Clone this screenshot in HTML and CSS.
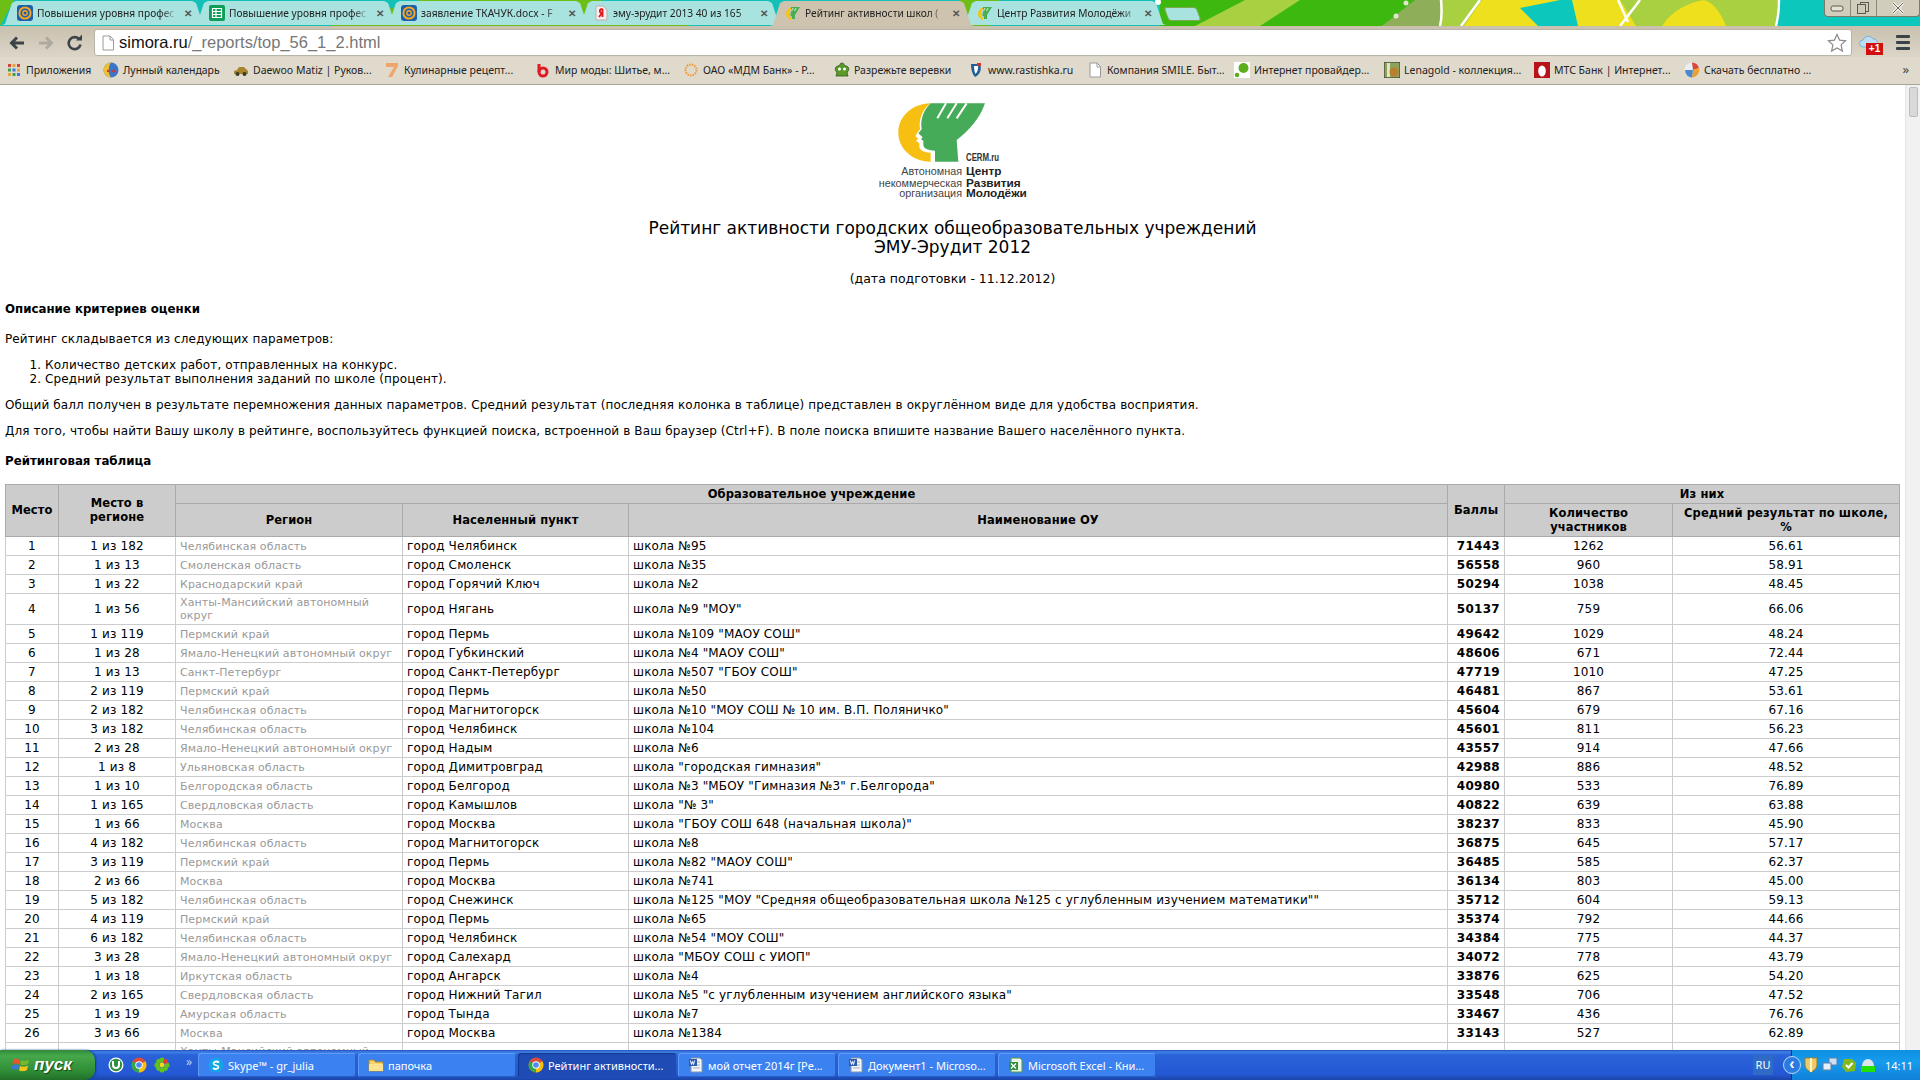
FILE: index.html
```html
<!DOCTYPE html>
<html lang="ru">
<head>
<meta charset="utf-8">
<title>Рейтинг активности школ</title>
<link rel="stylesheet" href="styles.css">
</head>
<body>
<svg class="defs" width="0" height="0" aria-hidden="true">
  <symbol id="i-mail" viewBox="0 0 16 16"><rect x="0" y="0" width="16" height="16" rx="3" fill="#1d5fa8"/><circle cx="8" cy="8" r="5.6" fill="none" stroke="#f6a623" stroke-width="2"/><circle cx="8" cy="8" r="2.2" fill="none" stroke="#f6a623" stroke-width="1.4"/></symbol>
  <symbol id="i-sheet" viewBox="0 0 16 16"><rect width="16" height="16" rx="2" fill="#0f9d58"/><path d="M3.5 3.5h9v9h-9zM3.5 6.5h9M3.5 9.5h9M7 3.5v9" fill="none" stroke="#fff" stroke-width="1.2"/></symbol>
  <symbol id="i-ya" viewBox="0 0 16 16"><path d="M3 1h7l4 4v10H3z" fill="#f4eeee" stroke="#b9b0b0"/><path d="M9.5 4v8M9.5 4C6 4 6 8 9 8L6 12" fill="none" stroke="#e01818" stroke-width="1.8"/></symbol>
  <symbol id="i-cerm" viewBox="0 0 16 16"><path d="M7 2C3 3 1 6 1 9s2 5 5 6l0-2C4 12 4 7 7 2z" fill="#f6c315"/><path d="M6 2h9L10 10v4H7v-2L5 10l1-2z" fill="#4cae54"/><path d="M8 3L6.5 6M11 3L9.5 6" stroke="#fff" stroke-width=".8"/></symbol>
  <symbol id="i-page" viewBox="0 0 16 16"><path d="M3 1h7l3.500 3.500V15H3z" fill="#fff" stroke="#9a9a9a"/><path d="M10 1v4h3.500" fill="none" stroke="#9a9a9a"/></symbol>
  <symbol id="i-word" viewBox="0 0 16 16"><path d="M3 1h9l2 2v12H3z" fill="#f3f6fb" stroke="#8a93a8"/><path d="M5 5h7M5 8h7M5 11h7" stroke="#9fb0cc"/><rect x="1" y="2" width="8" height="7" fill="#2f5cb0"/><path d="M2.500 3.500l1 4 1-3 1 3 1-4" fill="none" stroke="#fff"/></symbol>
  <symbol id="i-chrome" viewBox="0 0 16 16"><circle cx="8" cy="8" r="7.500" fill="#dd4b39"/><path d="M8 8L1.500 4.300A7.500 7.500 0 0 0 8 15.500z" fill="#2fa84f"/><path d="M8 8v7.500A7.500 7.500 0 0 0 14.500 4.300z" fill="#f4c20d"/><circle cx="8" cy="8" r="3.700" fill="#fff"/><circle cx="8" cy="8" r="2.800" fill="#4a8af4"/></symbol>
</svg>

<div class="window">
  <header class="browser">
    <div class="tabstrip">
      <svg class="theme" viewBox="0 0 1920 26" preserveAspectRatio="none" aria-hidden="true">
        <rect width="1920" height="26" fill="#3cb80f"/>
        <path d="M0 0H1160V26H0z" fill="#13c1b8"/>
        <path d="M0 26V0H14L0 26zM330 26L420 0H600L690 26zM960 0H1000L990 26H950z" fill="#6dbf16"/>
        <path d="M1195 26L1245 0H1300L1260 26z" fill="#a8d040"/>
        <path d="M1382 26L1420 0H1920V26z" fill="#a8d040"/>
        <path d="M1382 26L1415 0H1440L1440 26z" fill="#8fae5a"/>
        <path d="M1464 26L1482 0H1620L1636 26z" fill="#eee01c"/>
        <path d="M1520 8L1560 0H1572L1578 26L1538 26z" fill="#0cc8bc"/>
        <path d="M1662 26C1672 10 1690 2 1704 0C1716 4 1722 16 1726 26z" fill="#eee01c"/>
        <path d="M1778 0H1920V26H1776z" fill="#0cc8bc"/>
        <path d="M1441 0C1442 10 1442 18 1440 26M1480 0L1461 26M1640 0L1620 26M1618 0L1628 22M1779 0C1779 10 1778 18 1776 26" fill="none" stroke="#fff" stroke-width="2.500"/>
        <circle cx="1158" cy="2" r="3" fill="#fff"/><circle cx="1396" cy="16" r="2.500" fill="#dfe7cf"/><circle cx="1406" cy="3" r="2.500" fill="#dfe7cf"/>
      </svg>
      <div class="tabs">
        <div class="tab"><svg class="fav"><use href="#i-mail"/></svg><span class="tab-title">Повышения уровня профес</span><span class="tab-x">✕</span></div>
        <div class="tab"><svg class="fav"><use href="#i-sheet"/></svg><span class="tab-title">Повышение уровня профес</span><span class="tab-x">✕</span></div>
        <div class="tab"><svg class="fav"><use href="#i-mail"/></svg><span class="tab-title">заявление ТКАЧУК.docx - F</span><span class="tab-x">✕</span></div>
        <div class="tab"><svg class="fav"><use href="#i-ya"/></svg><span class="tab-title">эму-эрудит 2013 40 из 165</span><span class="tab-x">✕</span></div>
        <div class="tab tab-active"><svg class="fav"><use href="#i-cerm"/></svg><span class="tab-title">Рейтинг активности школ (</span><span class="tab-x">✕</span></div>
        <div class="tab"><svg class="fav"><use href="#i-cerm"/></svg><span class="tab-title">Центр Развития Молодёжи</span><span class="tab-x">✕</span></div>
        <div class="tab-new"></div>
      </div>
      <div class="winbtns">
        <span class="winbtn"><svg width="14" height="8" viewBox="0 0 14 8"><rect x="1" y="2" width="12" height="5" rx="2" fill="#e7e2d6" stroke="#5d5a50"/></svg></span>
        <span class="winbtn"><svg width="14" height="14" viewBox="0 0 14 14"><rect x="4.500" y="1.500" width="8" height="9" fill="none" stroke="#5d5a50"/><rect x="1.500" y="3.500" width="8" height="9" fill="#cfc9ba" stroke="#5d5a50"/></svg></span>
        <span class="winbtn winbtn-close"><svg width="14" height="12" viewBox="0 0 14 12"><path d="M2 1l10 10M12 1L2 11" stroke="#f2efe7" stroke-width="3"/><path d="M2 1l10 10M12 1L2 11" stroke="#6b675c" stroke-width="1"/></svg></span>
      </div>
    </div>

    <div class="toolbar">
      <svg class="tool-ico" viewBox="0 0 18 18"><path d="M16 9H4M9 3.500L3.500 9 9 14.500" fill="none" stroke="#3d4448" stroke-width="3"/></svg>
      <svg class="tool-ico" viewBox="0 0 18 18"><path d="M2 9h12M9 3.500L14.500 9 9 14.500" fill="none" stroke="#aeaaa0" stroke-width="3"/></svg>
      <svg class="tool-ico" viewBox="0 0 18 18"><path d="M14.500 10.500A6 6 0 1 1 13 5" fill="none" stroke="#3d4448" stroke-width="2.600"/><path d="M10 6.500h6v-6z" fill="#3d4448"/></svg>
      <div class="omnibox">
        <svg class="fav"><use href="#i-page"/></svg>
        <span class="url"><span class="url-host">simora.ru</span>/_reports/top_56_1_2.html</span>
        <svg class="star" viewBox="0 0 20 20"><path d="M10 1.500l2.600 5.600 6 .7-4.500 4.100 1.300 6.100-5.400-3.100-5.400 3.100 1.300-6.100L1.400 7.800l6-.7z" fill="#fff" stroke="#8b8b8b" stroke-width="1.200"/></svg>
      </div>
      <div class="ext">
        <svg class="ext-cloud" viewBox="0 0 20 14"><path d="M4 13a3.500 3.500 0 0 1 0-7 5.500 5.500 0 0 1 10-1 4 4 0 0 1 1 8z" fill="#bcdcf2" stroke="#7fb2d8"/></svg>
        <span class="ext-badge">+1</span>
      </div>
      <div class="hamburger"><i></i><i></i><i></i></div>
    </div>

    <nav class="bookmarks">
      <a class="bm bm-1"><svg class="fav" viewBox="0 0 16 16"><g><rect x="2" y="2" width="3" height="3" fill="#d9423a"/><rect x="6.500" y="2" width="3" height="3" fill="#e8a33a"/><rect x="11" y="2" width="3" height="3" fill="#d9423a"/><rect x="2" y="6.500" width="3" height="3" fill="#3f9e4d"/><rect x="6.500" y="6.500" width="3" height="3" fill="#3b78e7"/><rect x="11" y="6.500" width="3" height="3" fill="#e8a33a"/><rect x="2" y="11" width="3" height="3" fill="#e8a33a"/><rect x="6.500" y="11" width="3" height="3" fill="#3f9e4d"/><rect x="11" y="11" width="3" height="3" fill="#3b78e7"/></g></svg>Приложения</a>
      <a class="bm bm-2"><svg class="fav" viewBox="0 0 16 16"><circle cx="8" cy="8" r="7.500" fill="#3a76c8"/><path d="M8 .5A7.500 7.500 0 0 0 8 15.500C5 12 5 4 8 .5z" fill="#f0c030"/><circle cx="10.500" cy="9" r="1.500" fill="#d8352a"/><circle cx="5" cy="9" r="1.200" fill="#d8352a"/></svg>Лунный календарь</a>
      <a class="bm bm-3"><svg class="fav" viewBox="0 0 16 16"><path d="M1 12V9l3-1 2-3h5l3 3 1 1v3z" fill="#a8872c"/><circle cx="4.500" cy="12" r="2" fill="#3a3a28"/><circle cx="11.500" cy="12" r="2" fill="#3a3a28"/></svg>Daewoo Matiz | Руков...</a>
      <a class="bm bm-4"><svg class="fav" viewBox="0 0 16 16"><path d="M2 1h12v3L8 15H4l6-10H2z" fill="#f0a56c"/></svg>Кулинарные рецепт...</a>
      <a class="bm bm-5"><svg class="fav" viewBox="0 0 16 16"><path d="M4 2v8" stroke="#e01b24" stroke-width="3"/><circle cx="8" cy="10" r="4" fill="none" stroke="#e01b24" stroke-width="3"/></svg>Мир моды: Шитье, м...</a>
      <a class="bm bm-6"><svg class="fav" viewBox="0 0 16 16"><circle cx="8" cy="8" r="5.500" fill="none" stroke="#ef9a3c" stroke-width="2" stroke-dasharray="1.600 1"/></svg>ОАО «МДМ Банк» - Р...</a>
      <a class="bm bm-7"><svg class="fav" viewBox="0 0 16 16"><path d="M8 1a2 2 0 0 1 2 2l2 1a3 3 0 0 1 2 5l-1 2 1 3H2l1-3-1-2a3 3 0 0 1 2-5l2-1a2 2 0 0 1 2-2z" fill="#5a9a2a" stroke="#2f5a18" stroke-width=".8"/><circle cx="5.500" cy="7" r="1.500" fill="#fff"/><circle cx="10.500" cy="7" r="1.500" fill="#fff"/></svg>Разрежьте веревки</a>
      <a class="bm bm-8"><svg class="fav" viewBox="0 0 16 16"><path d="M3 2h9C14 7 12 13 7 15 4 12 3 7 3 2z" fill="#1d5f96"/><path d="M6 4h4C10.500 7 9.500 10 7.500 12 6.500 10 6 7 6 4z" fill="#fff"/><path d="M9 1h4v3H9z" fill="#d8352a"/></svg>www.rastishka.ru</a>
      <a class="bm bm-9"><svg class="fav"><use href="#i-page"/></svg>Компания SMILE. Быт...</a>
      <a class="bm bm-10"><svg class="fav" viewBox="0 0 16 16"><rect width="16" height="16" fill="#fff"/><circle cx="9.500" cy="6" r="5" fill="#5cae1a"/><circle cx="3" cy="13" r="2.300" fill="#5cae1a"/></svg>Интернет провайдер...</a>
      <a class="bm bm-11"><svg class="fav" viewBox="0 0 16 16"><rect width="16" height="16" fill="#8fa15a" stroke="#333"/><rect x="3" y="1" width="3" height="14" fill="#dfe7c0"/><circle cx="10" cy="10" r="4.500" fill="#b8802c"/></svg>Lenagold - коллекция...</a>
      <a class="bm bm-12"><svg class="fav" viewBox="0 0 16 16"><rect width="16" height="16" fill="#b8121a"/><ellipse cx="8" cy="9" rx="3.800" ry="5.500" fill="#fff"/></svg>МТС Банк | Интернет...</a>
      <a class="bm bm-13"><svg class="fav" viewBox="0 0 16 16"><circle cx="8" cy="8" r="7.500" fill="#e8eef4"/><path d="M8 .5A7.500 7.500 0 0 1 15 6L9 8z" fill="#d8483a"/><path d="M15 6A7.500 7.500 0 0 1 8 15.500L9 8z" fill="#eea12e"/><path d="M8 15.500A7.500 7.500 0 0 1 1 8l8 0z" fill="#4a8ac8"/></svg>Скачать бесплатно ...</a>
      <span class="bm-more">»</span>
    </nav>
  </header>

  <div class="viewport">
    <main class="page">
      <svg class="logo" viewBox="878 100 150 100" role="img" aria-label="Центр Развития Молодёжи">
        <g transform="translate(840 90) scale(.33333)">
          <path d="M272 40C215 42 175 80 175 128C175 175 215 213 272 215V188C252 187 238 180 238 170V160L228 152L235 146L226 138L232 128L240 118C235 85 250 55 272 40Z" fill="#f6bf12"/>
          <path d="M272 40H435C420 85 385 125 350 150L355 215H285V182C268 182 250 176 250 165V152L243 148L248 142L235 130L245 118C240 88 252 58 272 40Z" fill="#46ab58"/>
          <path d="M318 40L292 85M350 40L322 85M380 40L350 85" stroke="#fff" stroke-width="6"/>
        </g>
        <text class="logo-brand" x="966" y="161" textLength="33" lengthAdjust="spacingAndGlyphs">CERM.ru</text>
        <g class="logo-light"><text x="962" y="175">Автономная</text><text x="962" y="187">некоммерческая</text><text x="962" y="197">организация</text></g>
        <g class="logo-bold"><text x="966" y="175">Центр</text><text x="966" y="187">Развития</text><text x="966" y="197">Молодёжи</text></g>
      </svg>
      <h1 class="title">Рейтинг активности городских общеобразовательных учреждений<br>ЭМУ-Эрудит 2012</h1>
      <p class="date">(дата подготовки - 11.12.2012)</p>
      <h2 class="subhead">Описание критериев оценки</h2>
      <p class="text">Рейтинг складывается из следующих параметров:</p>
      <ol class="criteria">
        <li>Количество детских работ, отправленных на конкурс.</li>
        <li>Средний результат выполнения заданий по школе (процент).</li>
      </ol>
      <p class="text text-a">Общий балл получен в результате перемножения данных параметров. Средний результат (последняя колонка в таблице) представлен в округлённом виде для удобства восприятия.</p>
      <p class="text text-b">Для того, чтобы найти Вашу школу в рейтинге, воспользуйтесь функцией поиска, встроенной в Ваш браузер (Ctrl+F). В поле поиска впишите название Вашего населённого пункта.</p>
      <h2 class="subhead subhead-table">Рейтинговая таблица</h2>

      <table class="rating">
        <colgroup><col class="c1"><col class="c2"><col class="c3"><col class="c4"><col class="c5"><col class="c6"><col class="c7"><col class="c8"></colgroup>
        <thead>
          <tr class="h1"><th rowspan="2" class="th-side">Место</th><th rowspan="2" class="th-side">Место в<br>регионе</th><th colspan="3">Образовательное учреждение</th><th rowspan="2" class="th-score">Баллы</th><th colspan="2">Из них</th></tr>
          <tr class="h2"><th class="th-low">Регион</th><th class="th-low">Населенный пункт</th><th class="th-low">Наименование ОУ</th><th>Количество<br>участников</th><th>Средний результат по школе,<br>%</th></tr>
        </thead>
        <tbody>
          <tr><td>1</td><td>1 из 182</td><td class="reg">Челябинская область</td><td class="left">город Челябинск</td><td class="left">школа №95</td><td class="sc">71443</td><td>1262</td><td>56.61</td></tr>
          <tr><td>2</td><td>1 из 13</td><td class="reg">Смоленская область</td><td class="left">город Смоленск</td><td class="left">школа №35</td><td class="sc">56558</td><td>960</td><td>58.91</td></tr>
          <tr><td>3</td><td>1 из 22</td><td class="reg">Краснодарский край</td><td class="left">город Горячий Ключ</td><td class="left">школа №2</td><td class="sc">50294</td><td>1038</td><td>48.45</td></tr>
          <tr class="tall"><td>4</td><td>1 из 56</td><td class="reg">Ханты-Мансийский автономный округ</td><td class="left">город Нягань</td><td class="left">школа №9 "МОУ"</td><td class="sc">50137</td><td>759</td><td>66.06</td></tr>
          <tr><td>5</td><td>1 из 119</td><td class="reg">Пермский край</td><td class="left">город Пермь</td><td class="left">школа №109 "МАОУ СОШ"</td><td class="sc">49642</td><td>1029</td><td>48.24</td></tr>
          <tr><td>6</td><td>1 из 28</td><td class="reg">Ямало-Ненецкий автономный округ</td><td class="left">город Губкинский</td><td class="left">школа №4 "МАОУ СОШ"</td><td class="sc">48606</td><td>671</td><td>72.44</td></tr>
          <tr><td>7</td><td>1 из 13</td><td class="reg">Санкт-Петербург</td><td class="left">город Санкт-Петербург</td><td class="left">школа №507 "ГБОУ СОШ"</td><td class="sc">47719</td><td>1010</td><td>47.25</td></tr>
          <tr><td>8</td><td>2 из 119</td><td class="reg">Пермский край</td><td class="left">город Пермь</td><td class="left">школа №50</td><td class="sc">46481</td><td>867</td><td>53.61</td></tr>
          <tr><td>9</td><td>2 из 182</td><td class="reg">Челябинская область</td><td class="left">город Магнитогорск</td><td class="left">школа №10 "МОУ СОШ № 10 им. В.П. Поляничко"</td><td class="sc">45604</td><td>679</td><td>67.16</td></tr>
          <tr><td>10</td><td>3 из 182</td><td class="reg">Челябинская область</td><td class="left">город Челябинск</td><td class="left">школа №104</td><td class="sc">45601</td><td>811</td><td>56.23</td></tr>
          <tr><td>11</td><td>2 из 28</td><td class="reg">Ямало-Ненецкий автономный округ</td><td class="left">город Надым</td><td class="left">школа №6</td><td class="sc">43557</td><td>914</td><td>47.66</td></tr>
          <tr><td>12</td><td>1 из 8</td><td class="reg">Ульяновская область</td><td class="left">город Димитровград</td><td class="left">школа "городская гимназия"</td><td class="sc">42988</td><td>886</td><td>48.52</td></tr>
          <tr><td>13</td><td>1 из 10</td><td class="reg">Белгородская область</td><td class="left">город Белгород</td><td class="left">школа №3 "МБОУ "Гимназия №3" г.Белгорода"</td><td class="sc">40980</td><td>533</td><td>76.89</td></tr>
          <tr><td>14</td><td>1 из 165</td><td class="reg">Свердловская область</td><td class="left">город Камышлов</td><td class="left">школа "№ 3"</td><td class="sc">40822</td><td>639</td><td>63.88</td></tr>
          <tr><td>15</td><td>1 из 66</td><td class="reg">Москва</td><td class="left">город Москва</td><td class="left">школа "ГБОУ СОШ 648 (начальная школа)"</td><td class="sc">38237</td><td>833</td><td>45.90</td></tr>
          <tr><td>16</td><td>4 из 182</td><td class="reg">Челябинская область</td><td class="left">город Магнитогорск</td><td class="left">школа №8</td><td class="sc">36875</td><td>645</td><td>57.17</td></tr>
          <tr><td>17</td><td>3 из 119</td><td class="reg">Пермский край</td><td class="left">город Пермь</td><td class="left">школа №82 "МАОУ СОШ"</td><td class="sc">36485</td><td>585</td><td>62.37</td></tr>
          <tr><td>18</td><td>2 из 66</td><td class="reg">Москва</td><td class="left">город Москва</td><td class="left">школа №741</td><td class="sc">36134</td><td>803</td><td>45.00</td></tr>
          <tr><td>19</td><td>5 из 182</td><td class="reg">Челябинская область</td><td class="left">город Снежинск</td><td class="left">школа №125 "МОУ "Средняя общеобразовательная школа №125 с углубленным изучением математики""</td><td class="sc">35712</td><td>604</td><td>59.13</td></tr>
          <tr><td>20</td><td>4 из 119</td><td class="reg">Пермский край</td><td class="left">город Пермь</td><td class="left">школа №65</td><td class="sc">35374</td><td>792</td><td>44.66</td></tr>
          <tr><td>21</td><td>6 из 182</td><td class="reg">Челябинская область</td><td class="left">город Челябинск</td><td class="left">школа №54 "МОУ СОШ"</td><td class="sc">34384</td><td>775</td><td>44.37</td></tr>
          <tr><td>22</td><td>3 из 28</td><td class="reg">Ямало-Ненецкий автономный округ</td><td class="left">город Салехард</td><td class="left">школа "МБОУ СОШ с УИОП"</td><td class="sc">34072</td><td>778</td><td>43.79</td></tr>
          <tr><td>23</td><td>1 из 18</td><td class="reg">Иркутская область</td><td class="left">город Ангарск</td><td class="left">школа №4</td><td class="sc">33876</td><td>625</td><td>54.20</td></tr>
          <tr><td>24</td><td>2 из 165</td><td class="reg">Свердловская область</td><td class="left">город Нижний Тагил</td><td class="left">школа №5 "с углубленным изучением английского языка"</td><td class="sc">33548</td><td>706</td><td>47.52</td></tr>
          <tr><td>25</td><td>1 из 19</td><td class="reg">Амурская область</td><td class="left">город Тында</td><td class="left">школа №7</td><td class="sc">33467</td><td>436</td><td>76.76</td></tr>
          <tr><td>26</td><td>3 из 66</td><td class="reg">Москва</td><td class="left">город Москва</td><td class="left">школа №1384</td><td class="sc">33143</td><td>527</td><td>62.89</td></tr>
          <tr class="tall"><td></td><td></td><td class="reg">Ханты-Мансийский автономный округ</td><td class="left"></td><td class="left"></td><td class="sc"></td><td></td><td></td></tr>
        </tbody>
      </table>
    </main>
    <div class="scrollbar"><div class="thumb"></div></div>
  </div>

  <footer class="taskbar">
    <div class="start"><svg class="flag" viewBox="0 0 18 18"><path d="M1 4c3-2 5-1 7 0L7 8.500C5 7.500 3 7 .5 8.500z" fill="#e8552a"/><path d="M9 4c2 1 5 1.500 8-.5L16 8c-3 1.500-5 1.500-8 .5z" fill="#77b82a"/><path d="M.5 9.500C3 8 5 8.500 7 9.500L6 14c-2-1-4-1.500-6.500 0z" fill="#3b78e0"/><path d="M8 10c2 1 5 1 8-.5L15 14c-3 1.500-5 1.500-8 .5z" fill="#f3c31c"/></svg><span>пуск</span></div>
    <div class="quick">
      <svg class="fav" viewBox="0 0 16 16"><circle cx="8" cy="8" r="7.500" fill="#fff"/><circle cx="8" cy="8" r="6.200" fill="#2f8f3e"/><path d="M5 4v4a3 3 0 0 0 6 0V4" fill="none" stroke="#fff" stroke-width="2"/></svg>
      <svg class="fav"><use href="#i-chrome"/></svg>
      <svg class="fav" viewBox="0 0 16 16"><g fill="#5fc21e"><circle cx="8" cy="3" r="2.600"/><circle cx="8" cy="13" r="2.600"/><circle cx="3" cy="8" r="2.600"/><circle cx="13" cy="8" r="2.600"/><circle cx="4.500" cy="4.500" r="2.400"/><circle cx="11.500" cy="11.500" r="2.400"/><circle cx="4.500" cy="11.500" r="2.400"/></g><circle cx="11.500" cy="4.500" r="2.400" fill="#e43d2e"/><circle cx="8" cy="8" r="2.400" fill="#f6d51c"/></svg>
      <span class="quick-more">»</span>
    </div>
    <div class="tasks">
      <div class="task"><svg class="fav" viewBox="0 0 16 16"><circle cx="8" cy="8" r="7.500" fill="#12a5e8"/><path d="M11 5.500C9 3.800 5.500 4.500 5.500 6.500s5 1.500 5 3.500-3.500 2.800-5.500 1" fill="none" stroke="#fff" stroke-width="1.800"/></svg><span class="task-t">Skype™ - gr_julia</span></div>
      <div class="task"><svg class="fav" viewBox="0 0 16 16"><path d="M1 3h5l1.500 2H15v9H1z" fill="#f5d26b" stroke="#a98a2a"/><path d="M1 7h14v7H1z" fill="#fbe391"/></svg><span class="task-t">папочка</span></div>
      <div class="task task-active"><svg class="fav"><use href="#i-chrome"/></svg><span class="task-t">Рейтинг активности...</span></div>
      <div class="task"><svg class="fav"><use href="#i-word"/></svg><span class="task-t">мой отчет 2014г [Ре...</span></div>
      <div class="task"><svg class="fav"><use href="#i-word"/></svg><span class="task-t">Документ1 - Microso...</span></div>
      <div class="task"><svg class="fav" viewBox="0 0 16 16"><path d="M3 1h9l2 2v12H3z" fill="#eaf5e6" stroke="#4f9a4a"/><rect x="1" y="5" width="9" height="8" fill="#2f8f3e"/><path d="M3 6.500l5 5M8 6.500l-5 5" stroke="#fff" stroke-width="1.300"/></svg><span class="task-t">Microsoft Excel - Кни...</span></div>
    </div>
    <div class="lang">RU</div>
    <div class="tray">
      <span class="tray-back">‹</span>
      <svg class="fav" viewBox="0 0 16 16"><path d="M2 1h12v7c0 3-3 6-6 7-3-1-6-4-6-7z" fill="#eecb6a" stroke="#9a7a22"/><path d="M8 1v14" stroke="#fff4c8" stroke-width="2"/></svg>
      <svg class="fav" viewBox="0 0 16 16"><rect x="7" y="1" width="8" height="7" fill="#cfe0f5" stroke="#5c7ea8"/><rect x="1" y="6" width="8" height="7" fill="#e6eef8" stroke="#5c7ea8"/></svg>
      <svg class="fav" viewBox="0 0 16 16"><path d="M3 2h8l4 4-1 8-9 1-4-5z" fill="#83b81f"/><path d="M5 8l2.500 2.500L11.500 6" fill="none" stroke="#fff" stroke-width="2"/></svg>
      <svg class="fav" viewBox="0 0 16 16"><path d="M2 9a6 7 0 0 1 12 0z" fill="#dce4ec"/><rect x="1" y="9" width="14" height="6" fill="#22e000"/></svg>
      <span class="clock">14:11</span>
    </div>
  </footer>
</div>
</body>
</html>
```

FILE: styles.css
```css
* { box-sizing: border-box; }
html, body { margin: 0; padding: 0; height: 100%; overflow: hidden; background: #fff; }
.defs { position: absolute; }
.window { width: 1920px; height: 1080px; display: flex; flex-direction: column; overflow: hidden; font-family: "DejaVu Sans", Verdana, sans-serif; }
.fav { width: 16px; height: 16px; flex: none; display: block; }

/* browser frame */
.browser { flex: none; font-family: "Noto Sans", "Liberation Sans", sans-serif; }
.tabstrip { position: relative; height: 26px; overflow: hidden; }
.theme { position: absolute; inset: 0; width: 100%; height: 100%; }
.tabs { position: relative; display: flex; height: 25px; padding-left: 2px; padding-top: 1px; }
.tab { flex: none; width: 204px; margin-right: -12px; height: 24px; display: flex; align-items: center; gap: 4px; padding: 0 12px 1px 15px; font-size: 10.200px; color: #222; background: #a8e3df; clip-path: polygon(0 100%, 3px 96%, 10px 8%, 14px 0, 190px 0, 194px 8%, 201px 96%, 204px 100%); }
.tab-active { background: #cdc3ae; position: relative; z-index: 2; height: 25px; padding-bottom: 2px; }
.tab-title { flex: 1; overflow: hidden; white-space: nowrap; -webkit-mask-image: linear-gradient(to right, #000 88%, transparent); mask-image: linear-gradient(to right, #000 88%, transparent); }
.tab-x { flex: none; width: 12px; font-size: 10px; font-weight: 700; color: #555; text-align: center; }
.tab-new { flex: none; width: 33px; height: 14px; margin: 6px 0 0 12px; background: #a8e3df; border: 1px solid #80a850; border-radius: 3px; transform: skewX(20deg); }
.winbtns { position: absolute; top: 0; right: 0; width: 96px; height: 17px; display: flex; background: #d2ccbd; border: 1px solid #7d7a6c; border-top: 0; border-radius: 0 0 4px 4px; }
.winbtn { flex: 1; display: flex; align-items: center; justify-content: center; border-left: 1px solid #8d897b; }
.winbtn:first-child { border-left: 0; }
.winbtn-close { flex: 1.700; }

.toolbar { height: 31px; display: flex; align-items: center; padding: 2px 0 0 8px; background: linear-gradient(#c9c0ad, #dcd6c9); }
.tool-ico { width: 18px; height: 18px; flex: none; margin-right: 11px; }
.tool-ico:last-of-type { margin-right: 10px; }
.omnibox { flex: none; width: 1758px; height: 27px; display: flex; align-items: center; padding: 0 4px 0 5px; gap: 3px; background: #fff; border: 1px solid #b8b4aa; border-radius: 3px; }
.url { flex: 1; font-family: "Liberation Sans", sans-serif; font-size: 16.500px; color: #777; }
.url-host { color: #111; }
.star { width: 20px; height: 20px; flex: none; }
.ext { position: relative; width: 28px; height: 26px; margin-left: 7px; flex: none; }
.ext-cloud { position: absolute; left: 0; top: 4px; width: 20px; height: 14px; }
.ext-badge { position: absolute; left: 7px; top: 13px; width: 17px; height: 12px; background: #d01010; color: #fff; font: 700 10px/12px "Liberation Sans", sans-serif; text-align: center; }
.hamburger { flex: none; margin-left: 9px; width: 14px; display: flex; flex-direction: column; gap: 3px; }
.hamburger i { display: block; height: 3px; background: #3a4448; border-radius: 1px; }

.bookmarks { height: 28px; display: flex; align-items: center; padding: 0 0 2px 6px; background: #e0dacd; border-bottom: 1px solid #a8a498; font-size: 10.500px; color: #222; position: relative; }
.bm { flex: none; display: flex; align-items: center; gap: 4px; white-space: nowrap; }
.bm-1 { width: 97px; } .bm-2 { width: 130px; } .bm-3 { width: 151px; } .bm-4 { width: 151px; }
.bm-5 { width: 148px; } .bm-6 { width: 151px; } .bm-7 { width: 134px; } .bm-8 { width: 119px; }
.bm-9 { width: 147px; } .bm-10 { width: 150px; } .bm-11 { width: 150px; } .bm-12 { width: 150px; }
.bm-13 { width: 150px; }
.bm-more { position: absolute; right: 11px; top: 3px; font-size: 13px; color: #444; }

/* page */
.viewport { flex: 1; min-height: 0; display: flex; overflow: hidden; }
.page { flex: 1; min-width: 0; padding: 15px 5px 0; font-size: 12px; letter-spacing: .12px; line-height: 14px; color: #000; overflow: hidden; }
.logo { display: block; width: 150px; height: 100px; margin: 0 auto; overflow: visible; }
.logo-brand { font: 700 10px "Liberation Sans", sans-serif; fill: #333; letter-spacing: 0; }
.logo-light { font: 400 10.800px "Liberation Sans", sans-serif; fill: #444; text-anchor: end; letter-spacing: 0; }
.logo-bold { font: 700 11.800px "Liberation Sans", sans-serif; fill: #222; letter-spacing: 0; }
.title { margin: 19px 0 0; font-size: 17px; letter-spacing: 0; line-height: 19px; font-weight: 400; text-align: center; }
.date { margin: 15px 0 0; text-align: center; font-size: 12.500px; letter-spacing: 0; line-height: 14px; }
.subhead { margin: 16px 0 0; font-size: 11.800px; letter-spacing: 0; line-height: 14px; font-weight: 700; }
.text { margin: 16px 0 0; }
.criteria { margin: 12px 0 0; padding-left: 40px; }
.text-a { margin-top: 12px; }
.text-b { margin-top: 12px; }
.subhead-table { margin-top: 16px; }

.rating { width: 1894px; margin-top: 16px; table-layout: fixed; border-collapse: collapse; font-size: 12px; letter-spacing: .15px; line-height: 14px; }
.c1 { width: 53px; } .c2 { width: 117px; } .c3 { width: 227px; } .c4 { width: 226px; }
.c5 { width: 819px; } .c6 { width: 57px; } .c7 { width: 168px; } .c8 { width: 227px; }
.rating th { background: #ccc; border: 1px solid #aaa; padding: 0 2px; font-size: 11.500px; letter-spacing: .1px; font-weight: 700; text-align: center; vertical-align: middle; }
.h1 th { height: 19px; }
.h2 th { height: 33px; }
.rating .th-side { padding-bottom: 2px; }
.rating .th-score { padding-bottom: 2px; }
.rating .th-low { padding-top: 0; }
.rating td { height: 19px; padding: 0 4px; border: 1px solid #ccc; text-align: center; vertical-align: middle; }
.rating .tall td { height: 31px; }
.rating .left { text-align: left; }
.rating .reg { text-align: left; color: #999; font-size: 11px; letter-spacing: .1px; line-height: 13px; }
.rating .sc { font-weight: 700; text-align: right; letter-spacing: .3px; }

.scrollbar { flex: none; width: 15px; background: #f1f1f1; border-left: 1px solid #e4e4e4; padding: 2px 2px 0 3px; }
.thumb { height: 30px; background: #d9d9d9; border: 1px solid #bdbdbd; border-radius: 2px; }

/* taskbar */
.taskbar { flex: none; height: 30px; display: flex; align-items: stretch; color: #fff; font-family: "Noto Sans", "Liberation Sans", sans-serif; font-size: 11px; background: linear-gradient(#1f4fb8 0, #3f80e8 2px, #2a62d8 5px, #2458d4 80%, #1a44a8 100%); }
.start { flex: none; width: 95px; display: flex; align-items: center; gap: 4px; padding-left: 12px; border-radius: 0 10px 10px 0; background: linear-gradient(#2f8a3a, #45a84a 20%, #2d8a34 75%, #216e28); box-shadow: 1px 0 2px #113a8a; font: italic 700 17px "Liberation Sans", sans-serif; text-shadow: 1px 1px 1px #15471b; }
.flag { width: 18px; height: 18px; flex: none; }
.quick { flex: none; width: 103px; display: flex; align-items: center; gap: 7px; padding-left: 13px; }
.quick-more { font-size: 12px; color: #bcd4f8; margin: -8px 0 0 9px; }
.tasks { flex: none; width: 960px; display: flex; gap: 2px; padding: 3px 0 3px; }
.task { flex: none; width: 158px; display: flex; align-items: center; gap: 4px; padding-left: 10px; background: #3c81f0; border-radius: 3px; box-shadow: inset 1px 1px 0 #5f9bf5, inset -1px -1px 0 #2a5fc8; white-space: nowrap; }
.task-active { background: #1f4bb4; box-shadow: inset 1px 1px 1px #143a8c; }
.task-t { overflow: hidden; }
.lang { flex: none; align-self: center; margin-left: 595px; width: 20px; padding: 3px 2px; background: #2e6ac6; line-height: 14px; text-align: center; }
.tray { flex: none; margin-left: auto; width: 129px; display: flex; align-items: center; gap: 3px; background: linear-gradient(#0f8fe0, #169cee 40%, #1080d8); border-left: 1px solid #0a3a90; }
.tray-back { flex: none; width: 18px; height: 18px; margin: 0 -1px 0 -9px; border-radius: 50%; background: #2a7ae0; border: 1px solid #bcd8f8; font: 700 16px/14px "Liberation Sans", sans-serif; text-align: center; }
.clock { margin-left: 6px; }
```
